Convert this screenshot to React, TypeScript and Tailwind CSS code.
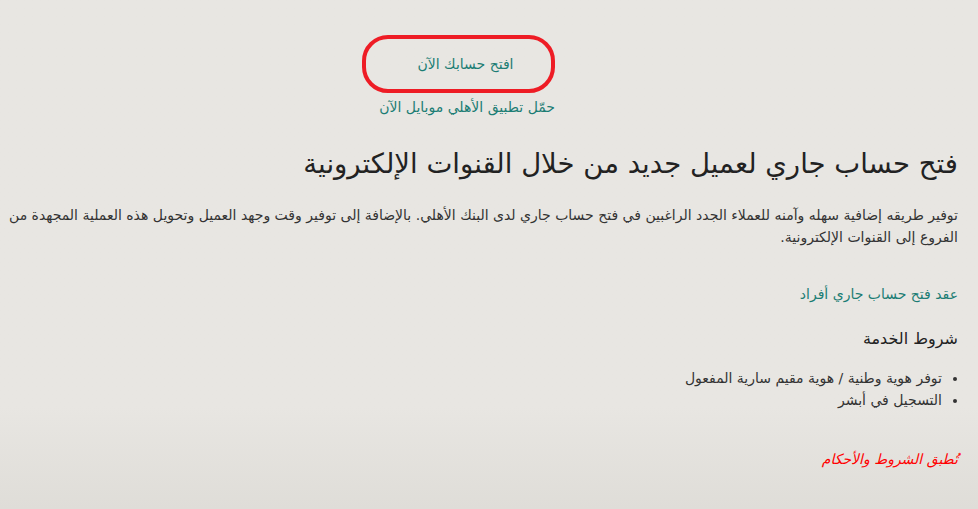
export default function App() {
  return (
    <div
      dir="rtl"
      className="min-h-[509px] w-full bg-gradient-to-b from-[#e8e6e2] from-80% to-[#dfddd8] pl-2 pr-[20px] pt-[35px] text-[#333] [font-family:'DejaVu_Sans',Tahoma,sans-serif]"
    >
      <div className="mr-[403px] flex w-[200px] flex-col">
        <div className="flex h-[58px] w-[193px] items-center justify-center rounded-[26px] border-4 border-[#ee1c25] pl-[14px]">
          <span className="text-[14px] text-[#1b7d74]">افتح حسابك الآن</span>
        </div>
        <a href="#" className="mt-[4px] text-[14px] leading-5 text-[#1b7d74]">
          حمّل تطبيق الأهلي موبايل الآن
        </a>
      </div>

      <h1 className="mt-[26px] text-[27.5px] leading-[40px] font-normal text-[#222]">
        فتح حساب جاري لعميل جديد من خلال القنوات الإلكترونية
      </h1>

      <p className="mt-[21px] text-[14px] leading-[22px] text-[#333]">
        توفير طريقه إضافية سهله وآمنه للعملاء الجدد الراغبين في فتح حساب جاري لدى البنك الأهلي. بالإضافة إلى توفير وقت وجهد العميل وتحويل هذه العملية المجهدة من الفروع إلى القنوات الإلكترونية.
      </p>

      <a href="#" className="mt-[36px] block text-[14px] leading-5 text-[#1b7d74]">
        عقد فتح حساب جاري أفراد
      </a>

      <h3 className="mt-[23px] text-[16px] leading-6 font-normal text-[#222]">شروط الخدمة</h3>

      <ul className="mt-[16px] list-disc pr-[16px] text-[14px] leading-[22px] text-[#333]">
        <li>توفر هوية وطنية / هوية مقيم سارية المفعول</li>
        <li>التسجيل في أبشر</li>
      </ul>

      <p className="mt-[38px] text-[14px] italic text-[#ff0000]">تُطبق الشروط والأحكام</p>
    </div>
  );
}
